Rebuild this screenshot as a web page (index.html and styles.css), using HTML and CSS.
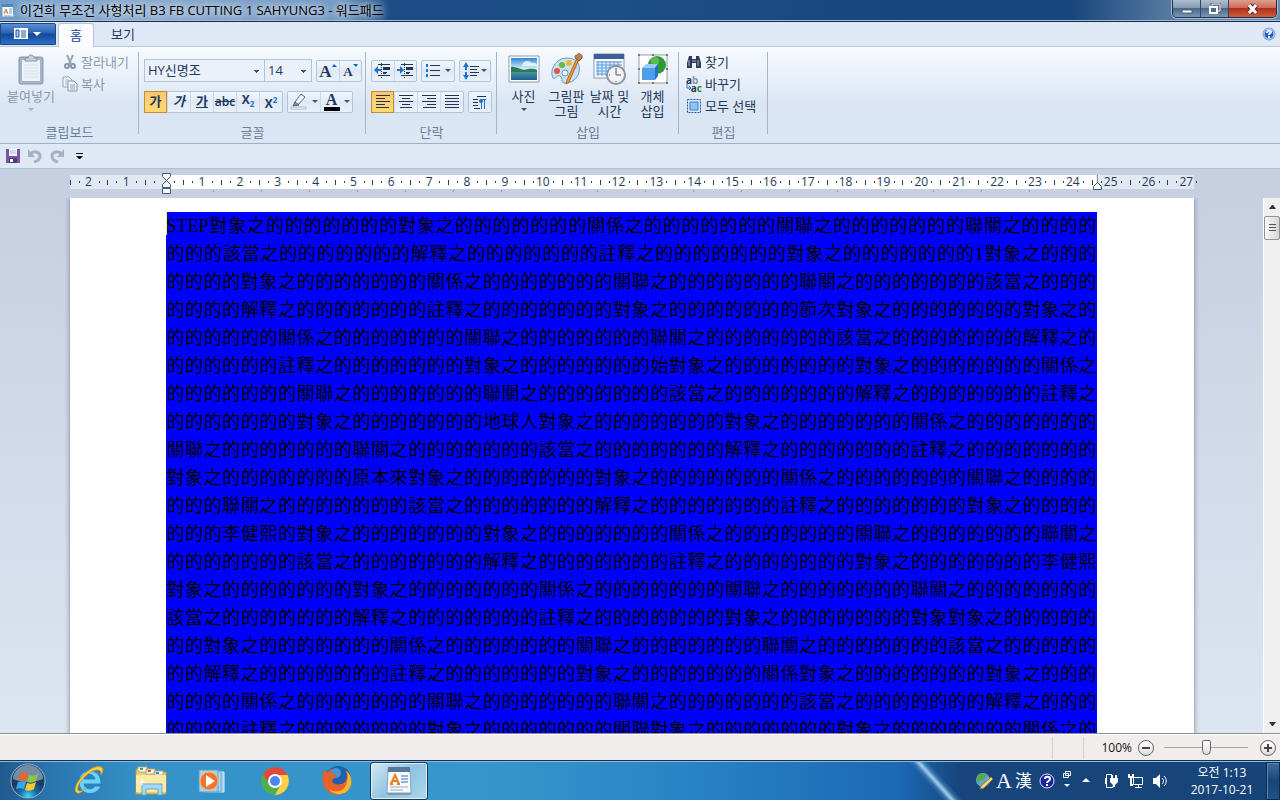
FILE: index.html
```html
<!DOCTYPE html>
<html lang="ko">
<head>
  <meta charset="utf-8">
  <title>이건희 무조건 사형처리 B3 FB CUTTING 1 SAHYUNG3 - 워드패드</title>
  <meta name="viewport" content="width=device-width, initial-scale=1">
  <link rel="stylesheet" href="styles.css">
</head>
<body>
  <header class="titlebar">
    <svg class="app-icon" width="14" height="16" viewBox="0 0 14 16"><path d="M1 2h11l1 12H1z" fill="#f4f9fd" stroke="#6f9cc4"/><path d="M1 1h11v3H1z" fill="#4f88bd"/><path d="M3 11l2-5 2 5M4 9h2" fill="none" stroke="#e8762c"/><path d="M8 6h3M8 8h3M8 10h3M3 13h8" stroke="#7fa5cb"/></svg>
    <h1>이건희 무조건 사형처리 B3 FB CUTTING 1 SAHYUNG3 - 워드패드</h1>
    <div class="window-buttons">
      <button class="win-btn" aria-label="최소화"><svg width="12" height="12"><path d="M1 7h10v3H1z" fill="#fff" stroke="#4c5c72"/></svg></button>
      <button class="win-btn" aria-label="이전 크기로 복원"><svg width="13" height="12"><path d="M4 1h8v7H4z" fill="none" stroke="#4c5c72" stroke-width="3"/><path d="M4 1h8v7H4z" fill="none" stroke="#fff" stroke-width="1"/><path d="M2 4h7v6H2z" fill="#59697f" stroke="#fff" stroke-width="2"/></svg></button>
      <button class="win-btn close" aria-label="닫기"><svg width="14" height="12"><path d="M3 2l7 8M10 2l-7 8" stroke="#5d3030" stroke-width="5"/><path d="M3 2l7 8M10 2l-7 8" stroke="#fff" stroke-width="3"/></svg></button>
    </div>
  </header>

  <nav class="tabs">
    <button class="file-tab" aria-label="워드패드"><svg width="28" height="14" viewBox="0 0 28 14"><path d="M0 1h14v11H0z" fill="#fff"/><path d="M2 3h3v7H2zM7 4h5M7 6h5M7 8h5M7 10h5" fill="#a9c2e6" stroke="#28579f"/><path d="M19 5h8l-4 4z" fill="#fff"/></svg></button>
    <button class="tab active">홈</button>
    <button class="tab">보기</button>
    <button class="help" aria-label="도움말"><svg width="14" height="14" viewBox="0 0 14 14"><circle cx="7" cy="7" r="6" fill="#1f5fd0" stroke="#86a9df"/><circle cx="7" cy="7" r="5" fill="none" stroke="#dbe8fa"/><path d="M5 6c0-3 4-3 4-1 0 1-2 1-2 3M7 9v2" fill="none" stroke="#fff" stroke-width="2"/></svg></button>
  </nav>

  <div class="ribbon">
    <section class="group clipboard">
      <div class="group-body">
        <button class="big" disabled>
          <svg width="26" height="32" viewBox="0 0 26 32"><rect x="1" y="4" width="24" height="27" rx="2" fill="#a5b3c8" stroke="#8796ae"/><path d="M4 7h18v21H4z" fill="#edf2f9"/><path d="M6 12h14M6 15h14M6 18h14M6 21h14M6 24h14" stroke="#d5dfec"/><path d="M7 8V5h3c0-4 6-4 6 0h3v3z" fill="#c6d0df" stroke="#8796ae"/></svg>
          붙여넣기<i class="arrow"></i>
        </button>
        <div class="stack">
          <button disabled><svg width="16" height="16" viewBox="0 0 16 16"><path d="M5 1l4 9M11 1l-4 9" stroke="#9aa8bc" stroke-width="2"/><circle cx="5" cy="12" r="2" fill="none" stroke="#8795aa" stroke-width="2"/><circle cx="11" cy="12" r="2" fill="none" stroke="#8795aa" stroke-width="2"/></svg>잘라내기</button>
          <button disabled><svg width="16" height="16" viewBox="0 0 16 16"><path d="M1 1h6l3 3v7H1z" fill="#eef3fa" stroke="#95a4b9"/><path d="M3 4h4M3 6h4M3 8h3" stroke="#adbacb"/><path d="M6 5h6l3 3v7H6z" fill="#eef3fa" stroke="#8796ac"/><path d="M8 9h5M8 11h5M8 13h5" stroke="#95a4b9"/></svg>복사</button>
        </div>
      </div>
      <h2>클립보드</h2>
    </section>

    <section class="group font">
      <div class="rows">
        <div class="row">
          <div class="combos">
            <select class="combo family" aria-label="글꼴 패밀리"><option>HY신명조</option></select>
            <select class="combo size" aria-label="글꼴 크기"><option>14</option></select>
          </div>
          <div class="btns">
            <button class="serif grow" aria-label="글꼴 크게">A<svg width="5" height="4"><path d="M0 3l2-3 3 3z" fill="#1763b6"/></svg></button>
            <button class="serif shrink" aria-label="글꼴 작게">A<svg width="5" height="4"><path d="M0 0h5l-2 3z" fill="#1763b6"/></svg></button>
          </div>
        </div>
        <div class="row">
          <div class="btns six">
            <button class="on"><b>가</b></button>
            <button><em>가</em></button>
            <button><u>가</u></button>
            <button class="small"><s>abc</s></button>
            <button class="small" aria-label="아래 첨자"><b>X<span class="low">2</span></b></button>
            <button class="small" aria-label="위 첨자"><b>X<span class="high">2</span></b></button>
          </div>
          <div class="btns wide">
            <button aria-label="텍스트 강조 색"><svg width="18" height="17" viewBox="0 0 18 17"><path d="M5 9l6-8 4 3-6 7-4 1z" fill="#f6f9fc" stroke="#53657d"/><path d="M5 9l4 3-6 1z" fill="#8192a8" stroke="#53657d"/><path d="M1 14h15v2H1z" fill="#fff" stroke="#aab7c9"/></svg><i class="arrow"></i></button>
            <button class="serif color" aria-label="텍스트 색"><span>A</span><i class="arrow"></i></button>
          </div>
        </div>
      </div>
      <h2>글꼴</h2>
    </section>

    <section class="group para">
      <div class="rows">
        <div class="row">
          <div class="btns">
            <button aria-label="내어쓰기"><svg width="18" height="16" viewBox="0 0 18 16"><path d="M4 1.500h12M9 4.500h7M9 6.500h7M9 9.500h4M4 12.500h12" stroke="#24344f"/><path d="M9 5.500h7M9 10.500h3" stroke="#24344f"/><path d="M7.500 0v16" stroke="#24344f" stroke-dasharray="1 1"/><path d="M0 7l4-4v3h3v2H4v3z" fill="#1b72cf"/></svg></button>
            <button aria-label="들여쓰기"><svg width="18" height="16" viewBox="0 0 18 16"><path d="M4 1.500h12M9 4.500h7M9 6.500h7M9 9.500h4M4 12.500h12" stroke="#24344f"/><path d="M9 5.500h7M9 10.500h3" stroke="#24344f"/><path d="M7.500 0v16" stroke="#24344f" stroke-dasharray="1 1"/><path d="M7 7L3 3v3H0v2h3v3z" fill="#1b72cf"/></svg></button>
          </div>
          <div class="btns bullets">
            <button aria-label="목록 시작"><svg width="16" height="15" viewBox="0 0 16 15"><path d="M5 2.500h10M5 7.500h10M5 12.500h10" stroke="#24344f"/><path d="M1 1h2v3H1zM1 6h2v3H1zM1 11h2v3H1z" fill="#1b72cf"/></svg><i class="arrow"></i></button>
          </div>
          <div class="btns spacing">
            <button aria-label="줄 간격"><svg width="16" height="18" viewBox="0 0 16 18"><path d="M7 4.500h9M7 7.500h7M7 10.500h9M7 13.500h7" stroke="#24344f"/><path d="M3 0l3 5H4v3H2V5H0zM3 18l3-5H4v-3H2v3H0z" fill="#1b72cf"/></svg><i class="arrow"></i></button>
          </div>
        </div>
        <div class="row">
          <div class="btns four">
            <button class="on" aria-label="왼쪽 맞춤"><svg width="16" height="13"><path d="M1 .5h14M1 3.500h9M1 6.500h14M1 9.500h9M1 12.500h13" stroke="#24344f"/></svg></button>
            <button aria-label="가운데 맞춤"><svg width="16" height="13"><path d="M1 .5h14M4 3.500h8M1 6.500h14M4 9.500h8M2 12.500h12" stroke="#24344f"/></svg></button>
            <button aria-label="오른쪽 맞춤"><svg width="16" height="13"><path d="M1 .5h14M6 3.500h9M1 6.500h14M6 9.500h9M2 12.500h13" stroke="#24344f"/></svg></button>
            <button aria-label="양쪽 맞춤"><svg width="16" height="13"><path d="M1 .5h14M1 3.500h14M1 6.500h14M1 9.500h14M1 12.500h14" stroke="#24344f"/></svg></button>
          </div>
          <div class="btns">
            <button aria-label="단락"><svg width="16" height="14"><path d="M5 1.500h9M1 4.500h5M1 7.500h5M1 10.500h5M2 13.500h6" stroke="#24344f"/><path d="M9.500 4v10M12.500 4v10M14 4.500H9" stroke="#1b72cf" fill="none"/><circle cx="9" cy="6" r="2" fill="#1b72cf"/></svg></button>
          </div>
        </div>
      </div>
      <h2>단락</h2>
    </section>

    <section class="group insert">
      <div class="group-body">
        <button class="big">
          <svg width="32" height="32" viewBox="0 0 32 32"><defs><linearGradient id="sky" x2="0" y2="1"><stop offset="0" stop-color="#2f87d6"/><stop offset=".5" stop-color="#d8f1fa"/><stop offset=".6" stop-color="#4b9c9a"/><stop offset="1" stop-color="#1e5a94"/></linearGradient></defs><path d="M1 3h30v26H1z" fill="#fff" stroke="#8c9aae"/><path d="M3 5h26v22H3z" fill="url(#sky)"/><path d="M3 14c4-1 8 2 13 3 5-1 9-2 13 0v2H3z" fill="#2f7a52"/><path d="M15 10c3-3 7-2 9 0 3-1 5 1 5 3H14z" fill="#f2fbff" opacity=".8"/></svg>
          사진<i class="arrow"></i>
        </button>
        <button class="big">
          <svg width="34" height="32" viewBox="0 0 34 32"><path d="M3 25C-1 17 6 5 17 5c9 0 14 6 12 14-1 7-9 12-15 11-4-1 0-5-4-7-2-2-5 4-7 2z" fill="#c7e1f6" stroke="#6d98c1"/><circle cx="7" cy="18" r="3" fill="#e05742"/><circle cx="12" cy="12" r="3" fill="#68b93d"/><circle cx="19" cy="10" r="3" fill="#f6b42c"/><circle cx="25" cy="14" r="2" fill="#8fc7ef"/><circle cx="15" cy="20" r="3" fill="#eef7fd" stroke="#6d98c1"/><path d="M29 6L19 29l-3 2 1-4L27 5z" fill="#ee9740" stroke="#b9621c"/><path d="M26 6c-3-5 2-3 3-6 1 2 4 1 3 5l-3 3z" fill="#b88555" stroke="#815a35"/></svg>
          <span>그림판<br>그림</span>
        </button>
        <button class="big">
          <svg width="34" height="32" viewBox="0 0 34 32"><path d="M1 1h30v24H1z" fill="#fff" stroke="#8795ab"/><path d="M1 1h30v5H1z" fill="#3c5f97"/><path d="M3 8h26v15H3z" fill="#dfeefb"/><path d="M3 9h26M3 12h26M3 15h26M3 18h26M3 21h26M5 8v15M9 8v15M13 8v15M17 8v15M21 8v15M25 8v15" stroke="#5c9ddb"/><circle cx="23" cy="22" r="9" fill="#f3f4f5" stroke="#8d949d" stroke-width="2"/><path d="M23 15v7h5M23 28v1M16 22h1" stroke="#4c535c" fill="none"/></svg>
          <span>날짜 및<br>시간</span>
        </button>
        <button class="big">
          <svg width="32" height="32" viewBox="0 0 32 32"><path d="M2 2h28v28H2z" fill="#fff" stroke="#9b9b9b"/><circle cx="20" cy="12" r="9" fill="#2c9a35"/><circle cx="18" cy="8" r="4" fill="#7fd072" opacity=".6"/><path d="M5 15l4-4h12l-3 4z" fill="#9acbf6"/><path d="M5 15h13v12H5z" fill="#4c9eea"/><path d="M18 15l3-4v12l-3 4z" fill="#2a72c6"/><path d="M1 1h2v2H1zM15 1h2v2h-2zM29 1h2v2h-2zM1 15h2v2H1zM29 15h2v2h-2zM1 29h2v2H1zM15 29h2v2h-2zM29 29h2v2h-2z" fill="#777"/></svg>
          <span>개체<br>삽입</span>
        </button>
      </div>
      <h2>삽입</h2>
    </section>

    <section class="group edit">
      <div class="stack">
        <button><svg width="16" height="16" viewBox="0 0 16 16"><path d="M3 2h3v3h4V2h3l2 7v5h-5V9H6v5H1V9z" fill="#2c3c58"/><path d="M3 6v6M12 6v6M6 7h4" stroke="#9fb3cf"/></svg>찾기</button>
        <button><span class="abac" aria-hidden="true"><span>a<i>b</i></span><span><svg width="6" height="7"><path d="M1 0v4h3M3 2l2 2-2 2" fill="none" stroke="#1b72cf"/></svg>a<i>c</i></span></span>바꾸기</button>
        <button><svg width="16" height="16" viewBox="0 0 16 16"><path d="M1.500 1.500h13v13h-13z" fill="none" stroke="#245a9c" stroke-dasharray="2 1"/><path d="M4 4h8v8H4z" fill="#8fc6f4" stroke="#3d86cc"/></svg>모두 선택</button>
      </div>
      <h2>편집</h2>
    </section>
  </div>

  <div class="quick">
    <button aria-label="저장"><svg width="14" height="14" viewBox="0 0 14 14"><path d="M0 0h14v14H0z" fill="#7a55a5"/><path d="M3 0h8v7H3z" fill="#f5f3fa"/><path d="M4 2h6M4 4h6" stroke="#c2b5d9"/><path d="M3 9h8v5H3z" fill="#4f3c76"/><path d="M4 10h3v3H4z" fill="#fff"/></svg></button>
    <button aria-label="실행 취소"><svg width="14" height="14" viewBox="0 0 14 14"><path d="M2 5c4-4 10-2 10 2 0 3-2 5-6 6" fill="none" stroke="#a6b3c6" stroke-width="3"/><path d="M0 0v8h7z" fill="#a6b3c6"/></svg></button>
    <button aria-label="다시 실행"><svg width="14" height="14" viewBox="0 0 14 14"><path d="M12 5C8 1 2 3 2 7c0 3 2 5 6 6" fill="none" stroke="#a6b3c6" stroke-width="3"/><path d="M14 0v8H7z" fill="#a6b3c6"/></svg></button>
    <button aria-label="빠른 실행 도구 모음 사용자 지정"><svg width="7" height="7"><path d="M0 0h7v1H0zM0 3h7L4 6H3z" fill="#111"/></svg></button>
  </div>

  <div class="ruler-bar">
    <div class="ruler">
      <ol class="ticks">
        <li>2</li><li>1</li><li></li><li>1</li><li>2</li><li>3</li><li>4</li><li>5</li><li>6</li><li>7</li>
        <li>8</li><li>9</li><li>10</li><li>11</li><li>12</li><li>13</li><li>14</li><li>15</li><li>16</li><li>17</li>
        <li>18</li><li>19</li><li>20</li><li>21</li><li>22</li><li>23</li><li>24</li><li>25</li><li>26</li><li>27</li>
      </ol>
      <div class="stops"></div>
      <svg class="marker left" width="11" height="24" viewBox="0 0 11 24"><path d="M1.500 1.500h8v3l-4 4 4 4v3h-8v-3l4-4-4-4zM1.500 16.500h8v5h-8z" fill="#f4f7fb" stroke="#49596f"/></svg>
      <svg class="marker right" width="11" height="16" viewBox="0 0 11 16"><path d="M5.500 0v8" stroke="#8c98aa"/><path d="M1.500 14.500v-3l4-4 4 4v3z" fill="#f4f7fb" stroke="#49596f"/></svg>
    </div>
  </div>

  <main class="workspace">
    <div class="canvas">
      <article class="page">
        <p class="selection">
          STEP對象之的的的的的的的對象之的的的的的的的關係之的的的的的的的關聯之的的的的的的的聯關之的的的的<br>
          的的的該當之的的的的的的的解釋之的的的的的的的註釋之的的的的的的的對象之的的的的的的的1對象之的的的<br>
          的的的的對象之的的的的的的的關係之的的的的的的的關聯之的的的的的的的聯關之的的的的的的的該當之的的的<br>
          的的的的解釋之的的的的的的的註釋之的的的的的的的對象之的的的的的的的節次對象之的的的的的的的對象之的<br>
          的的的的的的關係之的的的的的的的關聯之的的的的的的的聯關之的的的的的的的該當之的的的的的的的解釋之的<br>
          的的的的的的註釋之的的的的的的的對象之的的的的的的的始對象之的的的的的的的對象之的的的的的的的關係之<br>
          的的的的的的的關聯之的的的的的的的聯關之的的的的的的的該當之的的的的的的的解釋之的的的的的的的註釋之<br>
          的的的的的的的對象之的的的的的的的地球人對象之的的的的的的的對象之的的的的的的的關係之的的的的的的的<br>
          關聯之的的的的的的的聯關之的的的的的的的該當之的的的的的的的解釋之的的的的的的的註釋之的的的的的的的<br>
          對象之的的的的的的的原本來對象之的的的的的的的對象之的的的的的的的關係之的的的的的的的關聯之的的的的<br>
          的的的聯關之的的的的的的的該當之的的的的的的的解釋之的的的的的的的註釋之的的的的的的的對象之的的的的<br>
          的的的李健熙的對象之的的的的的的的對象之的的的的的的的關係之的的的的的的的關聯之的的的的的的的聯關之<br>
          的的的的的的的該當之的的的的的的的解釋之的的的的的的的註釋之的的的的的的的對象之的的的的的的的李健熙<br>
          對象之的的的的的的的對象之的的的的的的的關係之的的的的的的的關聯之的的的的的的的聯關之的的的的的的的<br>
          該當之的的的的的的的解釋之的的的的的的的註釋之的的的的的的的對象之的的的的的的的對象對象之的的的的的<br>
          的的對象之的的的的的的的關係之的的的的的的的關聯之的的的的的的的聯關之的的的的的的的該當之的的的的的<br>
          的的解釋之的的的的的的的註釋之的的的的的的的對象之的的的的的的的關係對象之的的的的的的的對象之的的的<br>
          的的的的關係之的的的的的的的關聯之的的的的的的的聯關之的的的的的的的該當之的的的的的的的解釋之的的的<br>
          的的的的註釋之的的的的的的的對象之的的的的的的的關聯對象之的的的的的的的對象之的的的的的的的關係之的
        </p>
      </article>
    </div>
    <div class="scrollbar">
      <button aria-label="위로"><svg width="7" height="4"><path d="M0 4l3-4h1l3 4z" fill="#333"/></svg></button>
      <div class="thumb"></div>
      <button class="down" aria-label="아래로"><svg width="7" height="4"><path d="M0 0h7L4 4H3z" fill="#333"/></svg></button>
    </div>
  </main>

  <footer class="status">
    <span class="pane"></span>
    <label for="zoom">100%</label>
    <button class="round" aria-label="축소"><svg width="8" height="8"><path d="M0 3h8v2H0z" fill="#444"/></svg></button>
    <input id="zoom" type="range" min="0" max="100" value="50">
    <button class="round" aria-label="확대"><svg width="8" height="8"><path d="M0 3h8v2H0zM3 0h2v8H3z" fill="#444"/></svg></button>
  </footer>

  <div class="taskbar">
    <button class="start" aria-label="시작"><svg width="38" height="38" viewBox="0 0 38 38"><defs><radialGradient id="orb" cy=".95"><stop offset="0" stop-color="#45d6f5"/><stop offset=".5" stop-color="#1b6ca8"/><stop offset="1" stop-color="#173f66"/></radialGradient></defs><circle cx="19" cy="19" r="17" fill="url(#orb)" stroke="#8fb5d3"/><path d="M4 17a15 14 0 0 1 30 0c-9 4-21 4-30 0z" fill="#fff" opacity=".4"/><path d="M11 12c3-2 5-1 8 0l-2 7c-3-1-5-1-8 0z" fill="#ee6329"/><path d="M20 13c3 1 5 1 9-1l-2 7c-3 2-6 2-9 1z" fill="#8cc63e"/><path d="M9 20c3-1 5-1 8 0l-2 7c-3-1-5-1-8 0z" fill="#39a5e6"/><path d="M18 21c3 1 5 1 9-1l-2 7c-3 2-6 2-9 1z" fill="#fcc82d"/></svg></button>
    <button class="task" aria-label="Internet Explorer"><svg width="34" height="34" viewBox="0 0 34 34"><path d="M29 20H12c1 6 9 6 11 2h6c-5 12-22 9-22-4C7 2 30 3 29 20zM12 15h11c-1-6-10-6-11 0z" fill="#6fd1f7" stroke="#2387c8"/><path d="M5 29c-8-5 13-30 24-26 3 1 2 5 0 8 0-3 0-5-4-5C17 6 4 20 6 26c1 2 4 1 7-1-3 3-6 5-8 4z" fill="#fbd34a" stroke="#c8971c"/></svg></button>
    <button class="task" aria-label="Windows 탐색기"><svg width="34" height="32" viewBox="0 0 34 32"><path d="M2 4h12l2 3h16v22H2z" fill="#e9cf78" stroke="#b9973d"/><path d="M4 2h9v5H4zM12 4h9v5h-9zM20 6h9v4h-9z" fill="#fff" stroke="#b9a769"/><path d="M6 3h3v2H6z" fill="#32a84a"/><path d="M14 5h3v2h-3z" fill="#d8503a"/><path d="M22 7h3v2h-3z" fill="#3a8ad0"/><path d="M2 10h30v17H2z" fill="#faeaa6"/><path d="M8 19h20v11h-4v-6H12v6H8z" fill="#a5d8f2" stroke="#68a9cf"/><path d="M8 14v6M5 17h6" stroke="#fff"/></svg></button>
    <button class="task" aria-label="Windows Media Player"><svg width="30" height="30" viewBox="0 0 30 30"><path d="M9 6h17v20H9z" fill="#9fd0ea" stroke="#d8eefa"/><path d="M6 5h17v21H6z" fill="#b0daf0" stroke="#6fa9cd"/><path d="M1 4h19v22H1z" fill="#a7d0e8" stroke="#5f9cc4"/><circle cx="11" cy="15" r="9" fill="#f0742a" stroke="#f9b581"/><path d="M8 9l9 6-9 6z" fill="#fff"/></svg></button>
    <button class="task" aria-label="Chrome"><svg width="30" height="30" viewBox="0 0 30 30"><circle cx="15" cy="15" r="14" fill="#4caf50"/><path d="M3 8a14 14 0 0 1 24.500 1H15a7 7 0 0 0-6 9z" fill="#e2483b"/><path d="M27.500 9a14 14 0 0 1-12.500 20l6-11a7 7 0 0 0-4-9z" fill="#fcd046"/><circle cx="15" cy="15" r="7" fill="#fff"/><circle cx="15" cy="15" r="5" fill="#4a87ee"/></svg></button>
    <button class="task" aria-label="Firefox"><svg width="32" height="32" viewBox="0 0 32 32"><circle cx="17" cy="14" r="13" fill="#1f5fae"/><circle cx="15" cy="8" r="5" fill="#69b7e8" opacity=".6"/><path d="M3 5c1 2 2 2 4 2 2-3 4-3 5-3-2 2-2 4 0 5 2 1 4 1 3 3l-4 3c0 5 9 6 13 2 3-4 2-9 0-12 6 4 8 12 4 18-6 11-24 8-26-5C1 13 1 9 3 5z" fill="#e4632a"/><path d="M26 6c6 6 6 16-1 21-6 4-14 2-17-3 6 4 14 3 17-4 2-5 2-9 1-14z" fill="#fbb62c"/></svg></button>
    <button class="task current" aria-label="워드패드"><svg width="26" height="30" viewBox="0 0 26 30"><path d="M2 3h22l1 24H1z" fill="#f6fafd" stroke="#8aa5bf"/><path d="M2 1h22v5H2z" fill="#55799c"/><path d="M0 27h26l-2 2H2z" fill="#8198ad"/><path d="M5 18L9 9l4 9M6 15h6M4 18h3M11 18h3" fill="none" stroke="#ef7b22" stroke-width="2"/><path d="M15 10h7M15 13h7M15 16h7" stroke="#2f74c2"/><path d="M4 21h18M4 24h13" stroke="#9aaabc"/></svg></button>

    <div class="tray">
      <div class="language">
        <svg width="18" height="18" viewBox="0 0 18 18"><circle cx="8" cy="8" r="7" fill="#5fa8d8"/><path d="M2 4c3-4 8-3 10 0-3 1-2 4-5 4S4 12 2 10zM9 9c3-1 5 1 5 2l-4 4z" fill="#58a84a"/><path d="M16 5l2 2-9 9-4 1 1-3z" fill="#f0d488" stroke="#a8702f"/></svg>
        <span class="ime">A</span>
        <span class="hanja">漢</span>
        <svg width="18" height="18" viewBox="0 0 18 18"><circle cx="9" cy="9" r="7" fill="#1823a0" stroke="#dfe4ff"/><path d="M7 7c0-3 5-3 5 0 0 2-3 2-3 4M9 12v2" fill="none" stroke="#fff" stroke-width="2"/></svg>
        <svg width="10" height="22" viewBox="0 0 10 22"><path d="M3.500 1.500h5v4h-5zM1.500 3.500h5v4h-5z" fill="#17457b" stroke="#fff"/><path d="M2 14h6l-3 3z" fill="#fff"/></svg>
      </div>
      <svg width="8" height="5"><path d="M0 4l4-4 4 4z" fill="#fff"/></svg>
      <div class="notify">
        <svg width="16" height="16" viewBox="0 0 16 16"><path d="M8 1.500H2.500v13H9v-2M1.500 5v6" fill="none" stroke="#fff"/><path d="M6 5h8v4l-3 3H9L6 9z" fill="#fff"/><path d="M8 2v4M12 2v4M10 11v3" stroke="#fff" stroke-width="2"/></svg>
        <svg width="16" height="16" viewBox="0 0 16 16"><path d="M5.500 4.500h9v7h-9zM7 14.500h7M10.500 12v2" fill="none" stroke="#fff"/><path d="M1 1v3h4V1M3 4v8h2" fill="none" stroke="#fff" stroke-width="2"/></svg>
        <svg width="16" height="16" viewBox="0 0 16 16"><path d="M1 5h3l4-4v14l-4-4H1z" fill="#fff"/><path d="M10 5c2 2 2 4 0 6M12 3c3 3 3 7 0 10" fill="none" stroke="#fff"/></svg>
      </div>
      <time class="clock" datetime="2017-10-21T01:13">오전 1:13<br>2017-10-21</time>
    </div>
    <button class="show-desktop" aria-label="바탕 화면 보기"></button>
  </div>
</body>
</html>
```

FILE: styles.css
```css
* { margin: 0; padding: 0; box-sizing: border-box; }
body {
  height: 100vh; display: flex; flex-direction: column; overflow: hidden;
  font-family: "Open Sans", "Noto Sans CJK KR", sans-serif; font-size: 13px; line-height: 15px;
  color: #1e395b; background: #dfe8f5;
}
button { font: inherit; color: inherit; border: none; background: none; display: flex; align-items: center; justify-content: center; }
h1, h2 { font-size: 13px; font-weight: 400; }

.titlebar {
  height: 22px; flex: none; display: flex; align-items: center; gap: 5px; padding-left: 1px;
  background: linear-gradient(90deg, #6f9cc9 0, #89a9cc 160px, #7399c3 340px, #1c4c86 390px, #1c4f86 620px, #17467c 900px, #17467c 1070px, #5c7fa6 1180px, #6c8cb0 100%);
  border-bottom: 1px solid #152c48; box-shadow: inset 0 -1px #a4bad5; color: #000;
}
.titlebar h1 { text-shadow: 0 0 8px #fff, 0 0 6px #dbe7f5; }
.window-buttons {
  display: flex; align-self: flex-start; height: 18px; margin-left: auto; margin-right: 3px;
  border: 1px solid #1e2f47; border-top: none; border-radius: 0 0 5px 5px; overflow: hidden;
  box-shadow: 0 0 0 1px #a9bdd4;
}
.win-btn { width: 28px; background: linear-gradient(#b0bfd1, #8599b2 45%, #4d6788 50%, #7b95b4); border-right: 1px solid #33465f; }
.win-btn.close { width: 47px; border-right: none; background: linear-gradient(#dda091, #cd6a55 45%, #b1301a 50%, #cd5e3c); }

.tabs { height: 25px; flex: none; display: flex; align-items: flex-end; background: #dfe8f5; border-bottom: 1px solid #b5c6da; }
.file-tab { width: 56px; height: 22px; align-self: flex-start; margin-top: 1px; background: linear-gradient(#5b8fd2, #2b62b4 45%, #12479c 50%, #2a72c4); border: 1px solid #1c4788; border-radius: 0 2px 0 0; }
.tab { width: 56px; height: 23px; }
.tab.active { width: 36px; height: 24px; margin: 0 1px -1px 2px; background: #fafcff; border: 1px solid #b5c6da; border-bottom: none; border-radius: 3px 3px 0 0; color: #15428b; }
.help { margin: 0 4px 5px auto; }

.ribbon { flex: none; height: 97px; display: flex; padding: 5px 0 3px; background: linear-gradient(#f8fbff, #e6eef9 35%, #dae5f3 60%, #dce7f5); border-bottom: 1px solid #9fb0c6; }
.group {
  display: flex; flex-direction: column; height: 88px; padding: 0 5px;
  background: linear-gradient(#a5b5ca, #a5b5ca) right top / 1px 82px no-repeat;
}
.group h2 { margin-top: auto; text-align: center; color: #6a7f9b; }
.group-body { display: flex; }
.clipboard { width: 139px; }
.clipboard .group-body { gap: 5px; }
.font { width: 227px; }
.para { width: 131px; }
.insert { width: 182px; }
.edit { width: 89px; }
button:disabled { color: #8b98a8; }
.big { width: 44px; flex-direction: column; justify-content: flex-start; padding-top: 1px; gap: 4px; white-space: nowrap; }
.clipboard .big { width: 52px; }
.insert .big { width: 43px; }
.arrow { border: 3px solid transparent; border-top-color: #44546a; border-bottom: none; }
:disabled .arrow { border-top-color: #a3afbf; }
.stack { display: flex; flex-direction: column; gap: 6px; padding: 2px 0; }
.stack button { height: 16px; gap: 3px; justify-content: flex-start; white-space: nowrap; }
.edit .stack { padding-left: 2px; }

.rows { display: flex; flex-direction: column; gap: 8px; padding-top: 7px; }
.row { display: flex; gap: 4px; height: 23px; align-items: center; }
.combos { display: flex; }
.combo {
  appearance: none; height: 23px; padding: 0 3px 2px; border: 1px solid #b3c3d8; border-radius: 0; color: #1e395b;
  font: 13px "Open Sans", "Noto Sans CJK KR", sans-serif;
  background-color: #eaf1fa;
  background-image: linear-gradient(#44546a, #44546a), linear-gradient(#44546a, #44546a), linear-gradient(#44546a, #44546a);
  background-repeat: no-repeat; background-size: 5px 1px, 3px 1px, 1px 1px;
  background-position: right 5px top 10px, right 6px top 11px, right 7px top 12px;
}
.family { width: 121px; }
.size { width: 47px; border-left: none; }
.btns { display: flex; height: 22px; border: 1px solid #b3c3d8; border-radius: 2px; background: linear-gradient(#f2f7fd, #dfe9f5 50%, #e9f1fa); }
.btns button { width: 22px; border-left: 1px solid #cbd8e8; gap: 4px; }
.btns button:first-child { border-left: none; }
.btns .on, .btns .on:first-child { margin: -1px 0 -1px -1px; border: 1px solid #c2912f; background: linear-gradient(#fdc568, #fbd078 40%, #ffd970); }
.btns.six button, .btns.four button { width: 23px; }
.btns.wide button { width: 32px; }
.btns.bullets button, .btns.spacing button { width: 32px; }
.btns.spacing button { width: 30px; gap: 2px; }
.btns em, .btns u, .btns s { font-weight: 600; }
.btns .small { font-size: 12px; }
.low, .high { font-size: 8px; color: #1b72cf; }
.low { vertical-align: -3px; }
.high { vertical-align: 5px; }
.serif { font-family: "Liberation Serif", serif; font-weight: 700; }
.btns .grow, .btns .shrink { align-items: flex-start; gap: 0; padding-top: 3px; }
.grow { font-size: 17px; }
.shrink { font-size: 13px; }
.color { font-size: 16px; }
.color span { width: 16px; border-bottom: 4px solid #000; line-height: 14px; }

.abac { width: 16px; display: flex; flex-direction: column; font-size: 10px; font-weight: 700; line-height: 8px; }
.abac span { display: flex; }
.abac i { font-style: normal; color: #8996a8; }
.abac span + span i { color: #2a8a35; }

.quick { flex: none; height: 25px; display: flex; align-items: center; gap: 8px; padding-left: 6px; background: #dfe8f5; border-bottom: 1px solid #b0c0d5; }
.quick button:last-child { margin-left: 4px; }

.ruler-bar { flex: none; height: 29px; padding: 6px 17px 0 0; background: #c6d0e1; }
.ruler { position: relative; width: 1124px; height: 14px; margin: 0 auto; background: linear-gradient(90deg, #e2e8f1 96px, #fff 96px, #fff 1026px, #e2e8f1 1026px); }
.ticks { display: flex; width: 1136px; list-style: none; font-size: 12px; line-height: 14px; }
.ticks li {
  flex: 1; height: 14px; text-align: center; background-repeat: no-repeat;
  background-image: linear-gradient(#2c3d57, #2c3d57), linear-gradient(#2c3d57, #2c3d57), linear-gradient(#2c3d57, #2c3d57);
  background-size: 1px 5px, 1px 2px, 1px 2px; background-position: 0 5px, 9px 6px, 29px 6px;
}
.stops { width: 930px; height: 2px; margin: 1px 0 0 96px; background: repeating-linear-gradient(90deg, transparent 0, transparent 47px, #8c9bb2 47px, #8c9bb2 48px); }
.marker { position: absolute; }
.marker.left { left: 91px; top: -3px; }
.marker.right { left: 1022px; top: 0; }

.workspace { flex: 1; min-height: 0; display: flex; background: linear-gradient(#c6d0e1, #dce6f2); border-bottom: 1px solid #8b8d92; }
.canvas { flex: 1; overflow: hidden; }
.page { width: 1124px; margin: 0 auto; padding: 14px 97px 0 96px; background: #fff; box-shadow: 0 0 5px #6f7f99; }
.selection {
  height: 560px; background: #0000fe; color: #000; border-left: 1px solid #0000fe;
  border-image: linear-gradient(#ff0 24px, #0000fe 24px) 1;
  font-family: "Liberation Serif", "Noto Sans CJK KR", serif; font-size: 18px; line-height: 28px;
  text-align: justify; text-align-last: justify;
}
.scrollbar { width: 17px; display: flex; flex-direction: column; background: #f0f0f0; border-left: 1px solid #fff; }
.scrollbar button { height: 18px; }
.scrollbar .down { margin-top: auto; }
.thumb {
  height: 24px; border: 1px solid #8f9398; border-radius: 2px;
  background: repeating-linear-gradient(#555 0, #555 1px, transparent 1px, transparent 3px) center / 7px 9px no-repeat, linear-gradient(90deg, #fafafa, #d5d5d5);
}

.status { flex: none; height: 26px; display: flex; align-items: center; gap: 6px; padding-right: 4px; background: #f1eded; border-top: 1px solid #fff; font-size: 12px; color: #111; }
.pane { width: 32px; height: 22px; margin: 0 11px 0 auto; border: 1px solid #d4d0d0; border-width: 0 1px; }
.round { width: 16px; height: 16px; border: 1px solid #666; border-radius: 50%; background: linear-gradient(#fff, #ddd); }
.status input { appearance: none; width: 84px; height: 16px; margin: 0 6px 0 4px; background: linear-gradient(#a9a9a9, #a9a9a9) center / 100% 1px no-repeat; }
.status input::-webkit-slider-thumb { appearance: none; width: 9px; height: 15px; border: 1px solid #666; border-radius: 2px 2px 5px 5px; background: linear-gradient(#fff, #ddd); }

.taskbar {
  flex: none; height: 40px; display: flex; align-items: center; gap: 4px; color: #fff;
  border-top: 1px solid #123252; box-shadow: inset 0 1px #8fbadb;
  background:
    linear-gradient(48deg, transparent 42%, #5c9fd466 46%, #a4cdec 50%, #5c9fd466 54%, transparent 58%) 890px 0 / 90px 100% no-repeat,
    linear-gradient(90deg, #22598d 0, #2b75af 50px, #3591c7 140px, #3797cd 480px, #2a84c5 680px, #1c68b4 900px, #17457b 960px, #174478 100%);
}
.start { width: 56px; height: 38px; }
.task { width: 58px; height: 38px; }
.task.current { border: 1px solid #16395b; border-radius: 3px; background: linear-gradient(135deg, #d4e8f5, #8fc3e3 50%, #abd6ee); box-shadow: inset 0 0 0 1px #dff0fa; }
.tray { margin-left: auto; display: flex; align-items: center; gap: 14px; }
.language { display: flex; align-items: center; gap: 6px; margin-right: -4px; }
.notify { display: flex; align-items: center; gap: 8px; }
.ime { font: 22px/24px "Liberation Serif", serif; margin: 0 -3px; }
.hanja { font-size: 17px; }
.clock { width: 80px; text-align: center; font-size: 12px; line-height: 17px; }
.show-desktop { width: 14px; height: 38px; border: 1px solid #0d2b50; box-shadow: inset 1px 1px #5d84ad; background: linear-gradient(#3f6c9c, #174478 50%, #1f5288); }
```
